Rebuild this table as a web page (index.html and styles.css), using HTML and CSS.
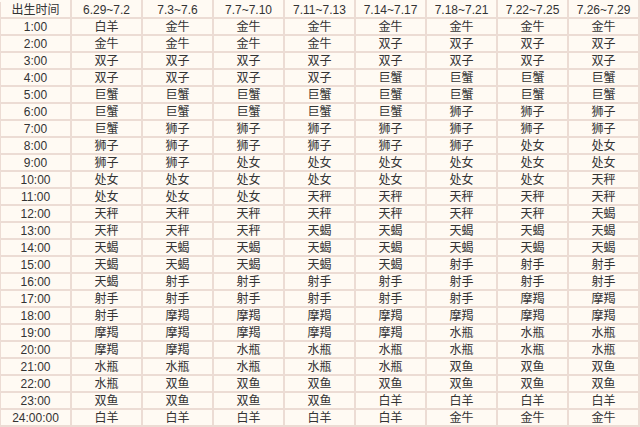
FILE: index.html
```html
<!DOCTYPE html>
<html>
<head>
<meta charset="utf-8">
<link rel="stylesheet" href="styles.css">
</head>
<body>
<table class="chart">
<thead>
<tr><th>出生时间</th><th>6.29~7.2</th><th>7.3~7.6</th><th>7.7~7.10</th><th>7.11~7.13</th><th>7.14~7.17</th><th>7.18~7.21</th><th>7.22~7.25</th><th>7.26~7.29</th></tr>
</thead>
<tbody>
<tr><td>1:00</td><td>白羊</td><td>金牛</td><td>金牛</td><td>金牛</td><td>金牛</td><td>金牛</td><td>金牛</td><td>金牛</td></tr>
<tr><td>2:00</td><td>金牛</td><td>金牛</td><td>金牛</td><td>金牛</td><td>双子</td><td>双子</td><td>双子</td><td>双子</td></tr>
<tr><td>3:00</td><td>双子</td><td>双子</td><td>双子</td><td>双子</td><td>双子</td><td>双子</td><td>双子</td><td>双子</td></tr>
<tr><td>4:00</td><td>双子</td><td>双子</td><td>双子</td><td>双子</td><td>巨蟹</td><td>巨蟹</td><td>巨蟹</td><td>巨蟹</td></tr>
<tr><td>5:00</td><td>巨蟹</td><td>巨蟹</td><td>巨蟹</td><td>巨蟹</td><td>巨蟹</td><td>巨蟹</td><td>巨蟹</td><td>巨蟹</td></tr>
<tr><td>6:00</td><td>巨蟹</td><td>巨蟹</td><td>巨蟹</td><td>巨蟹</td><td>巨蟹</td><td>狮子</td><td>狮子</td><td>狮子</td></tr>
<tr><td>7:00</td><td>巨蟹</td><td>狮子</td><td>狮子</td><td>狮子</td><td>狮子</td><td>狮子</td><td>狮子</td><td>狮子</td></tr>
<tr><td>8:00</td><td>狮子</td><td>狮子</td><td>狮子</td><td>狮子</td><td>狮子</td><td>狮子</td><td>处女</td><td>处女</td></tr>
<tr><td>9:00</td><td>狮子</td><td>狮子</td><td>处女</td><td>处女</td><td>处女</td><td>处女</td><td>处女</td><td>处女</td></tr>
<tr><td>10:00</td><td>处女</td><td>处女</td><td>处女</td><td>处女</td><td>处女</td><td>处女</td><td>处女</td><td>天秤</td></tr>
<tr><td>11:00</td><td>处女</td><td>处女</td><td>处女</td><td>天秤</td><td>天秤</td><td>天秤</td><td>天秤</td><td>天秤</td></tr>
<tr><td>12:00</td><td>天秤</td><td>天秤</td><td>天秤</td><td>天秤</td><td>天秤</td><td>天秤</td><td>天秤</td><td>天蝎</td></tr>
<tr><td>13:00</td><td>天秤</td><td>天秤</td><td>天秤</td><td>天蝎</td><td>天蝎</td><td>天蝎</td><td>天蝎</td><td>天蝎</td></tr>
<tr><td>14:00</td><td>天蝎</td><td>天蝎</td><td>天蝎</td><td>天蝎</td><td>天蝎</td><td>天蝎</td><td>天蝎</td><td>天蝎</td></tr>
<tr><td>15:00</td><td>天蝎</td><td>天蝎</td><td>天蝎</td><td>天蝎</td><td>天蝎</td><td>射手</td><td>射手</td><td>射手</td></tr>
<tr><td>16:00</td><td>天蝎</td><td>射手</td><td>射手</td><td>射手</td><td>射手</td><td>射手</td><td>射手</td><td>射手</td></tr>
<tr><td>17:00</td><td>射手</td><td>射手</td><td>射手</td><td>射手</td><td>射手</td><td>射手</td><td>摩羯</td><td>摩羯</td></tr>
<tr><td>18:00</td><td>射手</td><td>摩羯</td><td>摩羯</td><td>摩羯</td><td>摩羯</td><td>摩羯</td><td>摩羯</td><td>摩羯</td></tr>
<tr><td>19:00</td><td>摩羯</td><td>摩羯</td><td>摩羯</td><td>摩羯</td><td>摩羯</td><td>水瓶</td><td>水瓶</td><td>水瓶</td></tr>
<tr><td>20:00</td><td>摩羯</td><td>摩羯</td><td>水瓶</td><td>水瓶</td><td>水瓶</td><td>水瓶</td><td>水瓶</td><td>水瓶</td></tr>
<tr><td>21:00</td><td>水瓶</td><td>水瓶</td><td>水瓶</td><td>水瓶</td><td>水瓶</td><td>双鱼</td><td>双鱼</td><td>双鱼</td></tr>
<tr><td>22:00</td><td>水瓶</td><td>双鱼</td><td>双鱼</td><td>双鱼</td><td>双鱼</td><td>双鱼</td><td>双鱼</td><td>双鱼</td></tr>
<tr><td>23:00</td><td>双鱼</td><td>双鱼</td><td>双鱼</td><td>双鱼</td><td>白羊</td><td>白羊</td><td>白羊</td><td>白羊</td></tr>
<tr><td>24:00:00</td><td>白羊</td><td>白羊</td><td>白羊</td><td>白羊</td><td>白羊</td><td>金牛</td><td>金牛</td><td>金牛</td></tr>
</tbody>
</table>
</body>
</html>
```
FILE: styles.css
```css
html, body {
  margin: 0;
  padding: 0;
  background: #fffaf3;
}
.chart {
  width: 641px;
  margin: 0 0 0 -1px;
  border-collapse: collapse;
  table-layout: fixed;
  font-family: "Liberation Sans", "Noto Sans CJK SC", sans-serif;
  font-size: 12px;
  color: #333333;
  background: #fffaf3;
}
.chart th,
.chart td {
  border: 2px solid #ecdcd4;
  height: 13px;
  padding: 2px 0 0 0;
  text-align: center;
  vertical-align: middle;
  font-weight: normal;
  line-height: 13px;
  white-space: nowrap;
  overflow: hidden;
}
.chart thead th {
  border-top-color: #fffaf3;
}
```
